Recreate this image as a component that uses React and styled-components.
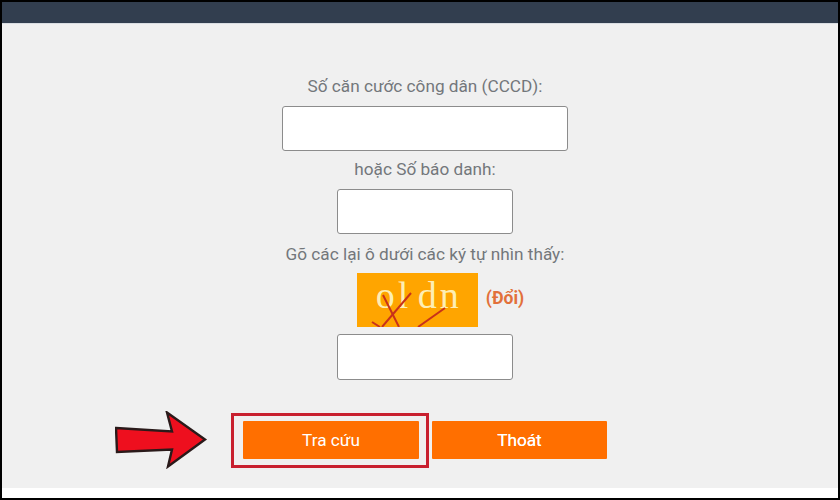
import styled, { createGlobalStyle } from "styled-components";

const GlobalStyle = createGlobalStyle`
  html, body {
    margin: 0;
    padding: 0;
    background: #000;
  }
  body {
    font-family: Roboto, "Liberation Sans", sans-serif;
  }
`;

const Page = styled.div`
  width: 836px;
  height: 496px;
  margin: 2px;
  background: #fff;
  display: flex;
  flex-direction: column;
`;

const TopBar = styled.header`
  height: 21px;
  background: #323e4f;
  border-bottom: 1px solid #d9dde2;
  flex: none;
`;

const Panel = styled.main`
  height: 464px;
  background: #f0f0f0;
  display: flex;
  flex-direction: column;
  align-items: center;
  padding: 50px 0 0 10px;
  box-sizing: border-box;
`;

const Label = styled.label`
  color: #73777b;
  font-size: 17.2px;
  line-height: 24px;
  height: 24px;
  margin-bottom: ${(p) => p.$gap || 8}px;
`;

const TextBox = styled.input`
  display: block;
  width: ${(p) => (p.$wide ? 286 : 176)}px;
  height: ${(p) => p.$h || 45}px;
  box-sizing: border-box;
  background: #fff;
  border: 1px solid #8c8c8c;
  border-radius: 3px;
  margin-bottom: ${(p) => p.$gap || 6}px;
`;

const CaptchaRow = styled.div`
  display: flex;
  align-items: center;
  gap: 8px;
  margin: 0 0 7px 31px;
`;

const Captcha = styled.div`
  position: relative;
  width: 121px;
  height: 54px;
  background: #ffa500;
  overflow: hidden;
`;

const CaptchaText = styled.span`
  position: absolute;
  left: 19px;
  top: 1px;
  font-family: "Liberation Serif", serif;
  font-size: 38px;
  line-height: 42px;
  letter-spacing: 3px;
  word-spacing: -6px;
  color: #fdeeb4;
  white-space: pre;
`;

const CaptchaLines = styled.svg`
  position: absolute;
  inset: 0;
`;

const Change = styled.a`
  color: #e2703a;
  font-size: 17.5px;
  font-weight: 700;
  margin-bottom: 4px;
`;

const ButtonRow = styled.div`
  align-self: flex-start;
  display: flex;
  align-items: center;
  margin: 25px 0 0 103px;
`;

const Arrow = styled.svg`
  flex: none;
  width: 94px;
  height: 58px;
  margin-right: 22px;
`;

const Highlight = styled.div`
  width: 198px;
  height: 55px;
  box-sizing: border-box;
  border: 3px solid #c8202f;
  padding-left: 2px;
  display: flex;
  align-items: center;
  justify-content: center;
  margin-right: 3px;
`;

const ActionButton = styled.button`
  flex: none;
  width: ${(p) => p.$w}px;
  height: 38px;
  margin: 0;
  padding: 0;
  border: none;
  border-radius: 1px;
  background: #ff6f00;
  color: #fff;
  font-family: inherit;
  font-size: 17.2px;
  text-shadow: ${(p) => (p.$bold ? "0 0 0.6px #fff" : "none")};
`;

export default function App() {
  return (
    <Page>
      <GlobalStyle />
      <TopBar />
      <Panel>
        <Label $gap={8}>Số căn cước công dân (CCCD):</Label>
        <TextBox $wide $gap={6} />
        <Label $gap={8}>hoặc Số báo danh:</Label>
        <TextBox $gap={8} />
        <Label $gap={7}>Gõ các lại ô dưới các ký tự nhìn thấy:</Label>
        <CaptchaRow>
          <Captcha>
            <CaptchaText>ol dn</CaptchaText>
            <CaptchaLines width="121" height="54" viewBox="0 0 121 54">
              <g fill="none" stroke="#c8321a" strokeWidth="2">
                <path d="M26 22 L42 54" />
                <path d="M54 20 L25 54" />
                <path d="M15 49 L23 54" />
                <path d="M88 35 L61 54" />
              </g>
            </CaptchaLines>
          </Captcha>
          <Change>(Đổi)</Change>
        </CaptchaRow>
        <TextBox $h={46} />
        <ButtonRow>
          <Arrow viewBox="0 0 94 58">
            <path
              d="M1 17 L57 20.5 L52 1.5 L90 28.5 L53 55.5 L57 38.5 L2 41 Z"
              fill="#ee0f1e"
              stroke="#2a1a1a"
              strokeWidth="2.4"
              strokeLinejoin="miter"
            />
          </Arrow>
          <Highlight>
            <ActionButton $w={176}>Tra cứu</ActionButton>
          </Highlight>
          <ActionButton $w={175} $bold>Thoát</ActionButton>
        </ButtonRow>
      </Panel>
    </Page>
  );
}
